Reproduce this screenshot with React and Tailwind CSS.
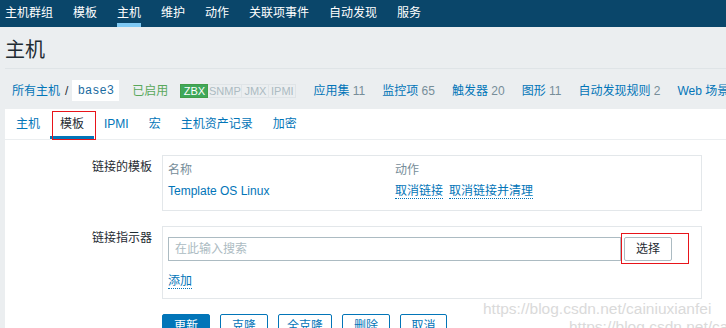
const NAV = ["主机群组", "模板", "主机", "维护", "动作", "关联项事件", "自动发现", "服务"];

const COUNTS = [
  { name: "监控项", n: "65" },
  { name: "触发器", n: "20" },
  { name: "图形", n: "11" },
  { name: "自动发现规则", n: "2" },
  { name: "Web 场景", n: "" },
];

const TABS = ["主机", "模板", "IPMI", "宏", "主机资产记录", "加密"];

const BUTTONS = [
  { label: "更新", w: "w-[48px]", primary: true },
  { label: "克隆", w: "w-[48px]" },
  { label: "全克隆", w: "w-[54px]" },
  { label: "删除", w: "w-[48px]" },
  { label: "取消", w: "w-[47px]" },
];

export default function App() {
  return (
    <div className="relative w-[726px] h-[328px] overflow-hidden bg-[#ebeef0] text-[12px] leading-[14px] text-[#1f2c33] font-['Liberation_Sans','Noto_Sans_CJK_SC',sans-serif]">
      {/* top menu */}
      <nav className="flex h-[27px] gap-5 bg-[#0a466a] pl-[5px]">
        {NAV.map((item) => (
          <div key={item} className="relative flex items-center pb-[2px] text-white">
            {item}
            {item === "主机" && <span className="absolute left-0 right-0 bottom-0 h-[4px] bg-[#7fc9f4]" />}
          </div>
        ))}
      </nav>

      {/* page title */}
      <div className="ml-[5px] flex h-[42px] items-center border-b border-[#dfe4e7] pt-[5px] text-[20px] leading-[24px]">
        主机
      </div>

      {/* breadcrumbs */}
      <div className="mt-[11px] flex h-[21px] items-center whitespace-nowrap">
        <span className="ml-[12px] shrink-0 text-[#0275b8]">所有主机</span>
        <span className="ml-[5px] shrink-0 text-[#1f2c33]">/</span>
        <span className="ml-[4px] flex h-[21px] w-[47px] shrink-0 items-center justify-center bg-white font-['Liberation_Mono',monospace] text-[#1a6ba0]">
          base3
        </span>
        <span className="ml-[13px] shrink-0 text-[#59a85b]">已启用</span>
        <div className="ml-[12px] flex h-[14px] shrink-0 text-[11px] leading-[12px]">
          <span className="flex w-[28px] justify-center border border-[#429e47] bg-[#3fa75a] text-white">ZBX</span>
          <span className="flex w-[34px] justify-center border border-l-0 border-[#dfe4e7] text-[#acbbc2]">SNMP</span>
          <span className="flex w-[27px] justify-center border border-l-0 border-[#dfe4e7] text-[#acbbc2]">JMX</span>
          <span className="flex w-[27px] justify-center border border-l-0 border-[#dfe4e7] text-[#acbbc2]">IPMI</span>
        </div>
        <span className="ml-[17px] shrink-0 text-[#0275b8]">
          应用集 <span className="text-[#768d99]">11</span>
        </span>
        <div className="ml-[17px] flex shrink-0 gap-[17px]">
          {COUNTS.map((c) => (
            <span key={c.name} className="shrink-0 text-[#0275b8]">
              {c.name} {c.n && <span className="text-[#768d99]">{c.n}</span>}
            </span>
          ))}
        </div>
      </div>

      {/* main panel */}
      <div className="ml-[5px] mt-[8px] h-[220px] bg-white">
        <div className="flex h-[31px] border-b border-[#ebeef0] pl-[1px]">
          {TABS.map((t) => (
            <div
              key={t}
              className={`relative flex h-[30px] items-center px-[10px] ${t === "模板" ? "text-[#1f2c33]" : "text-[#0275b8]"}`}
            >
              {t}
              {t === "模板" && <span className="absolute left-0 right-0 bottom-0 h-[3px] bg-[#0275b8]" />}
            </div>
          ))}
        </div>

        <div className="pt-[15px]">
          {/* linked templates */}
          <div className="flex">
            <div className="w-[157px] pr-[10px] pt-[5px] text-right">链接的模板</div>
            <div className="w-[540px] border border-[#e3e7ea] px-[5px] pt-[7px] pb-[11px]">
              <div className="grid grid-cols-[227px_1fr] text-[#768d99]">
                <span>名称</span>
                <span>动作</span>
              </div>
              <div className="mt-[7px] grid grid-cols-[227px_1fr]">
                <span className="text-[#0275b8]">Template OS Linux</span>
                <div className="flex gap-[6px] text-[#0275b8]">
                  <span className="border-b border-dotted border-[#0275b8]">取消链接</span>
                  <span className="border-b border-dotted border-[#0275b8]">取消链接并清理</span>
                </div>
              </div>
            </div>
          </div>

          {/* linked indicator */}
          <div className="mt-[15px] flex">
            <div className="w-[157px] pr-[10px] pt-[5px] text-right">链接指示器</div>
            <div className="w-[540px] border border-[#e3e7ea] px-[5px] pt-[10px] pb-[9px]">
              <div className="flex">
                <div className="flex h-[24px] w-[453px] items-center border border-[#acbbc2] pl-[6px] text-[#acbbc2]">
                  在此输入搜索
                </div>
                <button className="ml-[3px] h-[24px] w-[48px] rounded-[2px] border border-[#acbbc2] bg-white text-[#1f2c33]">
                  选择
                </button>
              </div>
              <div className="mt-[13px]">
                <span className="inline-block border-b border-dotted border-[#0275b8] text-[#0275b8]">添加</span>
              </div>
            </div>
          </div>

          {/* buttons */}
          <div className="ml-[157px] mt-[15px] flex gap-[10px]">
            {BUTTONS.map((b) => (
              <button
                key={b.label}
                className={`h-[24px] ${b.w} rounded-[2px] border border-[#0275b8] ${b.primary ? "bg-[#0275b8] text-white" : "bg-white text-[#0275b8]"}`}
              >
                {b.label}
              </button>
            ))}
          </div>
        </div>
      </div>

      {/* annotation boxes */}
      <div className="absolute left-[52px] top-[111px] h-[29px] w-[44px] border border-[#e8141a]" />
      <div className="absolute left-[621px] top-[233px] h-[31px] w-[68px] border border-[#e8141a]" />

      {/* watermark */}
      <div className="absolute left-[483px] top-[300px] text-[15.5px] leading-[18px] text-[#dadada]">
        https://blog.csdn.net/cainiuxianfei
      </div>
      <div className="absolute left-[569px] top-[318px] whitespace-nowrap text-[15.5px] leading-[18px] text-[#dadada]">
        https://blog.csdn.net/cainiuxianfei
      </div>
    </div>
  );
}
